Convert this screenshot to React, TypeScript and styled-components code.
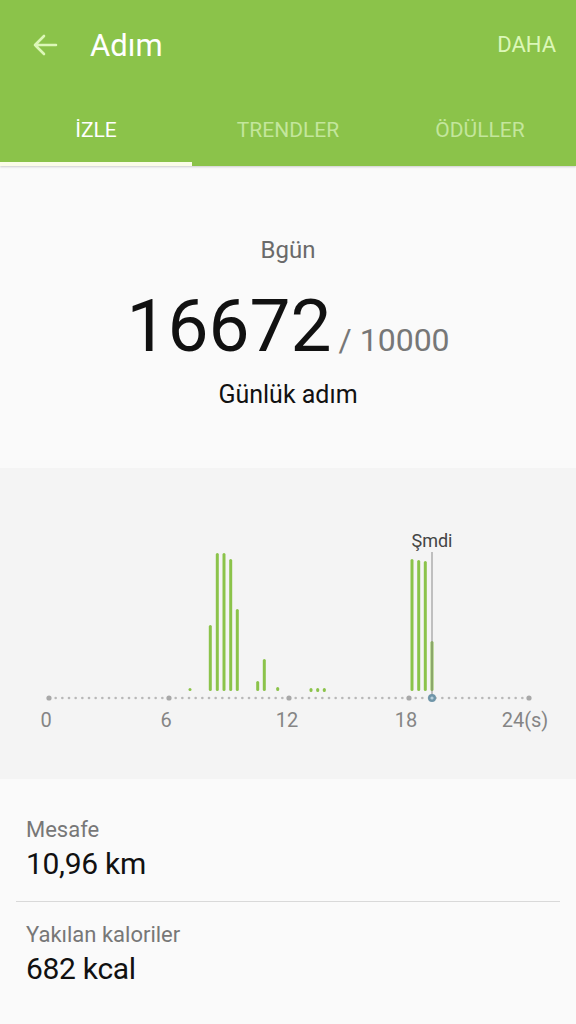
import * as React from 'react';
import styled, { createGlobalStyle } from 'styled-components';

const GlobalStyle = createGlobalStyle`
  html, body {
    margin: 0;
    padding: 0;
    background: #fafafa;
    font-family: Roboto, 'Noto Sans', sans-serif;
  }
`;

const green = '#8bc34a';

const Page = styled.div`
  width: 576px;
  height: 1024px;
  overflow: hidden;
  background: #fafafa;
`;

const Header = styled.header`
  background: ${green};
  box-shadow: 0 1px 2px rgba(0, 0, 0, 0.18);
`;

const Toolbar = styled.div`
  height: 92px;
  display: flex;
  align-items: center;
  padding: 0 20px 0 30px;
`;

const BackBtn = styled.div`
  width: 30px;
  height: 30px;
  display: flex;
  align-items: center;
  justify-content: center;
  margin-right: 30px;
  margin-top: -2px;
`;

const Title = styled.h1`
  margin: 0;
  flex: 1;
  color: #ffffff;
  font-size: 31px;
  font-weight: 400;
  margin-top: -2px;
`;

const More = styled.span`
  color: #dcf7b8;
  font-size: 22px;
  margin-top: -3px;
`;

const Tabs = styled.nav`
  display: flex;
  height: 74px;
`;

const Tab = styled.div<{ $active?: boolean }>`
  flex: 1;
  display: flex;
  align-items: center;
  justify-content: center;
  padding-top: 5px;
  font-size: 21px;
  color: ${({ $active }) => ($active ? '#ffffff' : '#c3e69c')};
  border-bottom: 4px solid ${({ $active }) => ($active ? '#fbfde8' : 'transparent')};
  box-sizing: border-box;
`;

const Summary = styled.section`
  height: 302px;
  display: flex;
  flex-direction: column;
  align-items: center;
  padding-top: 70px;
  box-sizing: border-box;
`;

const Day = styled.div`
  font-size: 24px;
  color: #6a6a6a;
  line-height: 28px;
`;

const CountRow = styled.div`
  display: flex;
  align-items: baseline;
  margin-top: 22px;
  line-height: 80px;
`;

const Count = styled.span`
  font-size: 73px;
  color: #111;
`;

const Goal = styled.span`
  font-size: 32px;
  color: #777;
  margin-left: 7px;
`;

const Caption = styled.div`
  font-size: 25px;
  color: #111;
  margin-top: 0;
`;

const ChartPanel = styled.section`
  background: #f4f4f4;
  height: 311px;
`;

const StatList = styled.section`
  padding: 33px 16px 0 16px;
`;

const Stat = styled.div<{ $divider?: boolean }>`
  padding: 4px 10px 17px;
  border-bottom: ${({ $divider }) => ($divider ? '1px solid #d9d9d9' : 'none')};
  & + & {
    padding-top: 19px;
  }
`;

const StatLabel = styled.div`
  font-size: 22px;
  color: #777;
  line-height: 28px;
`;

const StatValue = styled.div`
  font-size: 30px;
  color: #111;
  line-height: 40px;
  letter-spacing: -0.3px;
`;

const bars: [number, number][] = [
  [190, 688],
  [210.3, 625],
  [217.3, 553],
  [224, 553],
  [230.7, 559],
  [237.3, 609],
  [257.7, 681],
  [264.3, 659],
  [277.7, 687],
  [311, 689],
  [317.7, 689],
  [324.3, 689],
  [412, 559],
  [418.7, 560],
  [425.3, 561],
  [432, 641],
];

const top = 468;
const base = 691 - top;
const axisY = 698 - top;

const StepChart: React.FC = () => {
  const dots = [];
  for (let i = 0; i <= 72; i++) {
    const x = 49 + (i * 480) / 72;
    const major = i % 18 === 0;
    dots.push(<circle key={i} cx={x} cy={axisY} r={major ? 2.6 : 1.3} fill={major ? '#a8a8a8' : '#b8b8b8'} />);
  }
  const labels: [number, string][] = [
    [46, '0'],
    [166, '6'],
    [287, '12'],
    [406, '18'],
    [525, '24(s)'],
  ];
  return (
    <svg width="576" height="311" viewBox="0 0 576 311">
      {dots}
      {bars.map(([x, t], i) => (
        <line key={i} x1={x} x2={x} y1={t - top + 1.5} y2={base - 1.5} stroke={green} strokeWidth={3} strokeLinecap="round" />
      ))}
      <line x1={432} x2={432} y1={552 - top} y2={axisY} stroke="#8a8a8a" strokeWidth={1} />
      <circle cx={432} cy={axisY} r={4} fill="#6f95a8" />
      <circle cx={432} cy={axisY} r={1.6} fill="#b9d0dc" />
      <text x={432} y={547 - top} textAnchor="middle" fontSize="18" fill="#444" fontFamily="Roboto, sans-serif">
        Şmdi
      </text>
      {labels.map(([x, l]) => (
        <text key={l} x={x} y={727 - top} textAnchor="middle" fontSize="20" fill="#858585" fontFamily="Roboto, sans-serif">
          {l}
        </text>
      ))}
    </svg>
  );
};

const App: React.FC = () => {
  return (
    <Page>
      <GlobalStyle />
      <Header>
        <Toolbar>
          <BackBtn>
            <svg width="28" height="28" viewBox="0 0 28 28">
              <path d="M25 14H4M13 5l-9 9 9 9" stroke="#dcf7b8" strokeWidth="2.6" fill="none" strokeLinecap="round" strokeLinejoin="round" />
            </svg>
          </BackBtn>
          <Title>Adım</Title>
          <More>DAHA</More>
        </Toolbar>
        <Tabs>
          <Tab $active>İZLE</Tab>
          <Tab>TRENDLER</Tab>
          <Tab>ÖDÜLLER</Tab>
        </Tabs>
      </Header>
      <Summary>
        <Day>Bgün</Day>
        <CountRow>
          <Count>16672</Count>
          <Goal>/ 10000</Goal>
        </CountRow>
        <Caption>Günlük adım</Caption>
      </Summary>
      <ChartPanel>
        <StepChart />
      </ChartPanel>
      <StatList>
        <Stat $divider>
          <StatLabel>Mesafe</StatLabel>
          <StatValue>10,96 km</StatValue>
        </Stat>
        <Stat>
          <StatLabel>Yakılan kaloriler</StatLabel>
          <StatValue>682 kcal</StatValue>
        </Stat>
      </StatList>
    </Page>
  );
};

export default App;
